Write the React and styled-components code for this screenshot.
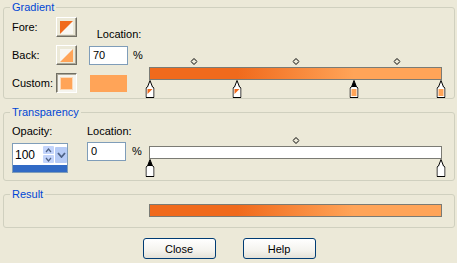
import styled, { createGlobalStyle } from 'styled-components'

const DARK = '#f06a1c'
const LIGHT = '#ffa458'
const RAMP = `linear-gradient(to right, ${DARK} 0%, ${DARK} 30%, ${LIGHT} 70%, ${LIGHT} 100%)`

const colorStops = [
  { pos: 0, kind: 'fore' },
  { pos: 30, kind: 'fore' },
  { pos: 70, kind: 'back', selected: true },
  { pos: 100, kind: 'back' },
]
const colorMids = [15, 50, 85]

const alphaStops = [
  { pos: 0, selected: true },
  { pos: 100 },
]
const alphaMids = [50]

const GlobalStyle = createGlobalStyle`
  html, body {
    margin: 0;
    padding: 0;
    background: #ece9d8;
  }
  body {
    font-family: "Liberation Sans", Arial, sans-serif;
    font-size: 11px;
    color: #000;
  }
  * {
    box-sizing: border-box;
  }
`

const Window = styled.div`
  width: 457px;
  height: 263px;
  padding: 0 2px 0 3px;
  display: flex;
  flex-direction: column;
  gap: 6px;
`

const Group = styled.fieldset`
  margin: 0;
  padding: 0;
  min-width: 0;
  border: 1px solid #d0d0bf;
  border-radius: 3px;
`

const Legend = styled.legend`
  margin-left: 6px;
  padding: 0 2px;
  line-height: 14px;
  color: #0046d5;
`

const GroupBody = styled.div`
  display: flex;
  padding: ${(p) => p.$pad};
`

const ControlGrid = styled.div`
  display: grid;
  grid-template-columns: ${(p) => p.$cols};
  grid-template-rows: ${(p) => p.$rows};
  grid-template-areas: ${(p) => p.$areas};
  row-gap: ${(p) => p.$gap}px;
  padding-top: ${(p) => p.$top || 0}px;
  align-content: start;
`

const Label = styled.span`
  grid-area: ${(p) => p.$area};
  line-height: 14px;
  white-space: nowrap;
  align-self: center;
`

const LocationCol = styled.div`
  grid-area: loc;
  display: flex;
  flex-direction: column;
  justify-content: flex-end;
  gap: 5px;
`

const InputRow = styled.div`
  display: flex;
  align-items: center;
  gap: 5px;
`

const TextBox = styled.div`
  grid-area: ${(p) => p.$area || 'auto'};
  width: 39px;
  height: 19px;
  margin-top: ${(p) => p.$lift || 0}px;
  border: 1px solid #7f9db9;
  background: #fff;
  padding: 0 3px;
  line-height: 17px;
`

const Pct = styled.span`
  grid-area: ${(p) => p.$area || 'auto'};
  line-height: 19px;
  margin-top: ${(p) => p.$lift || 0}px;
  padding-left: ${(p) => p.$indent || 0}px;
`

const ColorButton = styled.div`
  grid-area: ${(p) => p.$area};
  width: 21px;
  height: 20px;
  display: flex;
  align-items: center;
  justify-content: center;
  border: 1px solid;
  border-color: ${(p) => (p.$pressed ? '#716f64 #fff #fff #716f64' : '#fff #716f64 #716f64 #fff')};
  box-shadow: ${(p) => (p.$pressed ? 'inset 1px 1px #aca899' : 'inset -1px -1px #aca899')};
  background: ${(p) => (p.$pressed ? '#f5f4ee' : '#ece9d8')};
`

const Swatch = styled.div`
  grid-area: sw;
  width: 37px;
  height: 17px;
  margin-left: 1px;
  align-self: center;
  background: ${LIGHT};
`

const BarArea = styled.div`
  flex: 1;
  display: flex;
  flex-direction: column;
  padding-top: ${(p) => p.$top}px;
`

const MarkerTrack = styled.div`
  position: relative;
  height: ${(p) => p.$h}px;
  margin: 0 1px;
`

const Marker = styled.div`
  position: absolute;
  left: ${(p) => p.$pos}%;
  top: ${(p) => p.$top}px;
  transform: translateX(-50%);
  display: flex;
`

const Bar = styled.div`
  height: 13px;
  border: 1px solid #7b7b74;
  background: ${(p) => p.$fill};
`

const Spinner = styled.div`
  grid-area: spin;
  width: 56px;
  height: 30px;
  border: 1px solid #7f9db9;
  background: #fff;
  display: flex;
  flex-direction: column;
`

const SpinTop = styled.div`
  flex: 1;
  display: flex;
  align-items: center;
  padding-left: 2px;
`

const SpinValue = styled.span`
  flex: 1;
  font-size: 12px;
`

const SpinArrows = styled.div`
  width: 11px;
  display: flex;
  flex-direction: column;
  gap: 1px;
`

const SpinBtn = styled.div`
  height: 8px;
  background: #c3d4fb;
  border-radius: 1px;
  display: flex;
  align-items: center;
  justify-content: center;
`

const DropBtn = styled.div`
  width: 12px;
  height: 16px;
  margin-left: 1px;
  background: #b6cbf6;
  border-radius: 1px;
  display: flex;
  align-items: center;
  justify-content: center;
`

const SpinSelection = styled.div`
  height: 7px;
  background: #316ac5;
`

const ButtonRow = styled.div`
  display: flex;
  justify-content: center;
  gap: 27px;
  padding-top: 4px;
`

const PushButton = styled.button`
  width: 73px;
  height: 21px;
  padding: 0;
  border: 1px solid #003c74;
  border-radius: 3px;
  background: linear-gradient(#ffffff, #f4f3ee 60%, #e4e1d7);
  font-family: "Liberation Sans", Arial, sans-serif;
  font-size: 11px;
  color: #000;
`

const Diamond = () => (
  <svg width="7" height="7" viewBox="0 0 7 7">
    <path d="M3.5 0.5 L6.5 3.5 L3.5 6.5 L0.5 3.5 Z" fill="none" stroke="#000" />
  </svg>
)

const StopIcon = ({ selected, kind }) => (
  <svg width="9" height="18" viewBox="0 0 9 18">
    <path d="M4.5 0.5 L7 7 L8.5 8 L8.5 17.5 L0.5 17.5 L0.5 8 L2 7 Z" fill="#fff" stroke="#000" />
    {selected && <path d="M4.5 0.5 L7 7 L2 7 Z" fill="#000" />}
    {kind === 'fore' && <path d="M2 9 H7 L2 14 Z" fill={DARK} />}
    {kind === 'back' && <rect x="2" y="9" width="5" height="7" fill={LIGHT} />}
  </svg>
)

const ForeIcon = () => (
  <svg width="13" height="13" viewBox="0 0 13 13">
    <rect width="13" height="13" fill="#f8f7f2" />
    <path d="M0 0 H13 L0 13 Z" fill={DARK} />
  </svg>
)

const BackIcon = () => (
  <svg width="13" height="13" viewBox="0 0 13 13">
    <rect width="13" height="13" fill="#f8f7f2" />
    <path d="M13 0 V13 H0 Z" fill={LIGHT} />
  </svg>
)

const CustomIcon = () => (
  <svg width="13" height="13" viewBox="0 0 13 13">
    <rect width="13" height="13" fill="#fcd9b8" />
    <rect x="1" y="1" width="11" height="11" fill={LIGHT} />
  </svg>
)

const Chevron = ({ up, w = 5, h = 3, sw = 1.2 }) => (
  <svg width={w + 2} height={h + 2} viewBox={`0 0 ${w + 2} ${h + 2}`}>
    <path
      d={up ? `M1 ${h + 1} L${w / 2 + 1} 1 L${w + 1} ${h + 1}` : `M1 1 L${w / 2 + 1} ${h + 1} L${w + 1} 1`}
      fill="none"
      stroke="#4d6185"
      strokeWidth={sw}
    />
  </svg>
)

const GradientBar = ({ top, fill, stops, mids }) => (
  <BarArea $top={top}>
    <MarkerTrack $h={12}>
      {mids.map((m) => (
        <Marker key={m} $pos={m} $top={3}>
          <Diamond />
        </Marker>
      ))}
    </MarkerTrack>
    <Bar $fill={fill} />
    <MarkerTrack $h={18}>
      {stops.map((s) => (
        <Marker key={s.pos} $pos={s.pos} $top={0}>
          <StopIcon selected={s.selected} kind={s.kind} />
        </Marker>
      ))}
    </MarkerTrack>
  </BarArea>
)

export default function App() {
  return (
    <Window>
      <GlobalStyle />

      <Group>
        <Legend>Gradient</Legend>
        <GroupBody $pad="3px 12px 0 8px">
          <ControlGrid
            $cols="44px 21px 12px 39px 21px"
            $rows="20px 20px 20px"
            $areas={`"fore fbtn . loc loc" "back bbtn . loc loc" "cust cbtn . sw ."`}
            $gap={8}
          >
            <Label $area="fore">Fore:</Label>
            <ColorButton $area="fbtn">
              <ForeIcon />
            </ColorButton>
            <LocationCol>
              <Label>Location:</Label>
              <InputRow>
                <TextBox>70</TextBox>
                <Pct>%</Pct>
              </InputRow>
            </LocationCol>
            <Label $area="back">Back:</Label>
            <ColorButton $area="bbtn">
              <BackIcon />
            </ColorButton>
            <Label $area="cust">Custom:</Label>
            <ColorButton $area="cbtn" $pressed>
              <CustomIcon />
            </ColorButton>
            <Swatch />
          </ControlGrid>
          <GradientBar top={38} fill={RAMP} stops={colorStops} mids={colorMids} />
        </GroupBody>
      </Group>

      <Group>
        <Legend>Transparency</Legend>
        <GroupBody $pad="0 12px 3px 8px">
          <ControlGrid
            $cols="56px 19px 39px 23px"
            $rows="14px 30px"
            $areas={`"op . lc ." "spin . lin pct"`}
            $gap={5}
            $top={5}
          >
            <Label $area="op">Opacity:</Label>
            <Label $area="lc">Location:</Label>
            <Spinner>
              <SpinTop>
                <SpinValue>100</SpinValue>
                <SpinArrows>
                  <SpinBtn>
                    <Chevron up />
                  </SpinBtn>
                  <SpinBtn>
                    <Chevron />
                  </SpinBtn>
                </SpinArrows>
                <DropBtn>
                  <Chevron w={7} h={4} sw={1.8} />
                </DropBtn>
              </SpinTop>
              <SpinSelection />
            </Spinner>
            <TextBox $area="lin" $lift={-1}>0</TextBox>
            <Pct $area="pct" $indent={6} $lift={-1}>%</Pct>
          </ControlGrid>
          <GradientBar top={15} fill="#fff" stops={alphaStops} mids={alphaMids} />
        </GroupBody>
      </Group>

      <Group>
        <Legend>Result</Legend>
        <GroupBody $pad="3px 12px 10px 145px">
          <BarArea $top={0}>
            <Bar $fill={RAMP} />
          </BarArea>
        </GroupBody>
      </Group>

      <ButtonRow>
        <PushButton>Close</PushButton>
        <PushButton>Help</PushButton>
      </ButtonRow>
    </Window>
  )
}
